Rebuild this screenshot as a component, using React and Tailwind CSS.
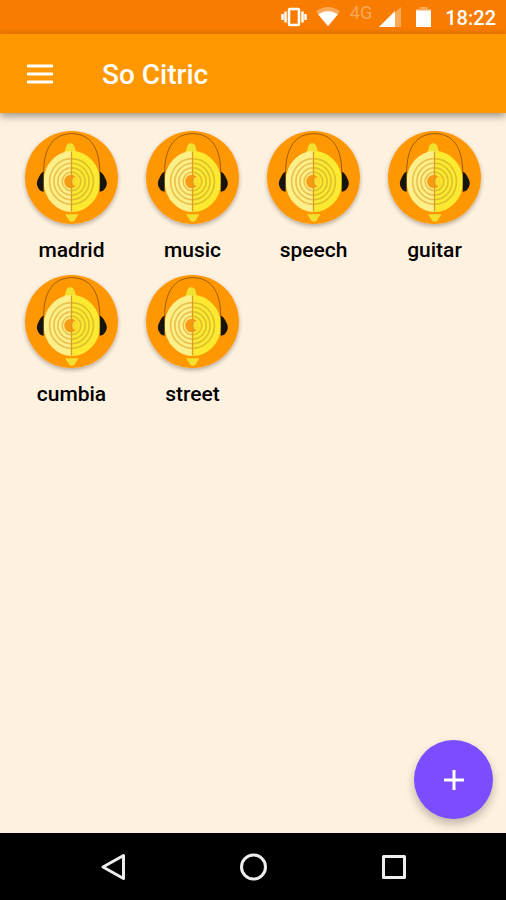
const SOUNDS = ["madrid", "music", "speech", "guitar", "cumbia", "street"];

function VibrateIcon() {
  return (
    <svg className="h-5 w-[26px]" viewBox="0 0 26 20" fill="none" stroke="#fff" aria-hidden="true">
      <rect x="8" y="2" width="10" height="16" rx="1" strokeWidth="2.500" />
      <path d="M4.500 4.500v11M21.500 4.500v11" strokeWidth="2.500" />
      <path d="M1.500 7v6M24.500 7v6" strokeWidth="2.500" />
    </svg>
  );
}

function WifiIcon() {
  return (
    <svg className="h-5 w-6" viewBox="0 0 24 20" fill="#fff" aria-hidden="true">
      <path d="M12 19 0 4.500C3.500 1.600 7.500 0 12 0s8.500 1.600 12 4.500Z" opacity="0.35" />
      <path d="M12 19 2.200 7.500C5.500 5 8.500 4.200 12 4.200S18.500 5 21.800 7.500Z" />
    </svg>
  );
}

function SignalIcon() {
  return (
    <svg className="h-5 w-[22px]" viewBox="0 0 22 20" fill="#fff" aria-hidden="true">
      <path d="M0 20 22 0v20Z" opacity="0.35" />
      <path d="M0 20 16 4v16Z" />
    </svg>
  );
}

function BatteryIcon() {
  return (
    <svg className="h-5 w-[15px]" viewBox="0 0 15 20" fill="#fff" aria-hidden="true">
      <path d="M0 2h3.500V0h8v2H15v2H0Z" opacity="0.35" />
      <path d="M0 3.500h15V20H0Z" />
    </svg>
  );
}

/* Lemon slice wearing headphones */
function LemonIcon() {
  return (
    <svg className="size-full" viewBox="26 20 280 280" aria-hidden="true">
      <circle cx="166" cy="160" r="140" fill="#fe9702" />
      <path d="M143 90c0-10 5-11 6-19 1-9 6-14 13-14s13 5 14 14c1 8 6 9 6 19Z" fill="#f1e030" />
      <path d="M167 80a85 92 0 0 0 0 184Z" fill="#fdf08a" />
      <path d="M167 80a85 92 0 0 1 0 184Z" fill="#fbea30" />
      <g fill="none" strokeWidth="5">
        <path
          d="M166 103a66 69 0 0 0 0 138M166 117a53 55 0 0 0 0 110M166 131a41 41 0 0 0 0 82M166 144a28 28 0 0 0 0 56"
          stroke="#ecc04e"
        />
        <path
          d="M166 103a66 69 0 0 1 0 138M166 117a53 55 0 0 1 0 110M166 131a41 41 0 0 1 0 82M166 144a28 28 0 0 1 0 56"
          stroke="#dfc02c"
        />
      </g>
      <circle cx="164" cy="172" r="20" fill="#f89a12" />
      <path d="M186 158c-12-3-18 5-18 14s7 17 18 14Z" fill="#fbdc2c" />
      <path d="M166 82v180" stroke="#dc9a26" strokeWidth="4" />
      <path d="M147 271h40l-13 20q-7 5-14 0Z" fill="#f1e030" />
      <path
        d="M82 146C82 70 112 28 167 28s84 42 84 118"
        fill="none"
        stroke="#9a5c08"
        strokeWidth="3"
      />
      <path d="M82 143v60c-9-1-13-6-17-13-5-9-4-18 1-27 5-10 9-18 16-20Z" fill="#15140f" />
      <path d="M251 143v60c9-1 14-6 18-13 5-9 4-18-1-27-5-10-10-18-17-20Z" fill="#15140f" />
    </svg>
  );
}

function StatusBar() {
  return (
    <div className="flex h-[34px] items-center justify-end bg-[#f77c00] pr-2.5 text-white">
      <VibrateIcon />
      <span className="ml-[9px]">
        <WifiIcon />
      </span>
      <span className="mb-2 ml-2.5 text-lg leading-5 text-white/35">4G</span>
      <span className="ml-[7px]">
        <SignalIcon />
      </span>
      <span className="ml-[15px]">
        <BatteryIcon />
      </span>
      <span className="ml-3.5 pt-0.5 text-xl leading-6 font-medium">18:22</span>
    </div>
  );
}

function AppBar() {
  return (
    <header className="relative flex h-[79px] items-center bg-[#ff9800] px-[26px] text-white shadow-[0_3px_8px_rgba(0,0,0,0.4)]">
      <button type="button" aria-label="Open menu">
        <svg className="h-5 w-7" viewBox="0 0 28 20" stroke="#fff" strokeWidth="3" aria-hidden="true">
          <path d="M1 2h26M1 10h26M1 18h26" />
        </svg>
      </button>
      <h1 className="ml-12 pt-0.5 text-[28px] leading-8 font-medium">So Citric</h1>
    </header>
  );
}

function SoundButton({ name }) {
  return (
    <button type="button" className="flex flex-col items-center gap-3">
      <span className="size-[93px] rounded-full shadow-[0_2px_4px_rgba(0,0,0,0.3)]">
        <LemonIcon />
      </span>
      <span className="text-[21px] leading-7 font-medium text-black">{name}</span>
    </button>
  );
}

function NavBar() {
  return (
    <nav className="flex h-[67px] items-center justify-center gap-[112px] bg-black">
      <button type="button" aria-label="Back">
        <svg className="size-7" viewBox="0 0 28 28" fill="none" stroke="#eee" strokeWidth="3" strokeLinejoin="round" aria-hidden="true">
          <path d="M24.500 2.500v23L4 14Z" />
        </svg>
      </button>
      <button type="button" aria-label="Home">
        <svg className="size-7" viewBox="0 0 28 28" fill="none" stroke="#eee" strokeWidth="3" aria-hidden="true">
          <circle cx="14.500" cy="14" r="12" />
        </svg>
      </button>
      <button type="button" aria-label="Recent apps">
        <svg className="size-7" viewBox="0 0 28 28" fill="none" stroke="#eee" strokeWidth="3" strokeLinejoin="round" aria-hidden="true">
          <path d="M4.500 3.500h21v21h-21Z" />
        </svg>
      </button>
    </nav>
  );
}

export default function App() {
  return (
    <div className="flex min-h-screen flex-col bg-[#fff1df] font-['Roboto',sans-serif]">
      <StatusBar />
      <AppBar />
      <main className="relative flex-1 px-[11px] pt-[18px]">
        <div className="grid grid-cols-4 gap-y-[11px]">
          {SOUNDS.map((name) => (
            <SoundButton key={name} name={name} />
          ))}
        </div>
        <button
          type="button"
          aria-label="Add sound"
          className="absolute right-[13px] bottom-3.5 flex size-[79px] items-center justify-center rounded-full bg-[#7c4dff] shadow-[0_5px_10px_rgba(0,0,0,0.25)]"
        >
          <svg className="size-5" viewBox="0 0 20 20" stroke="#fff" strokeWidth="3" aria-hidden="true">
            <path d="M10 0v20M0 10h20" />
          </svg>
        </button>
      </main>
      <NavBar />
    </div>
  );
}
